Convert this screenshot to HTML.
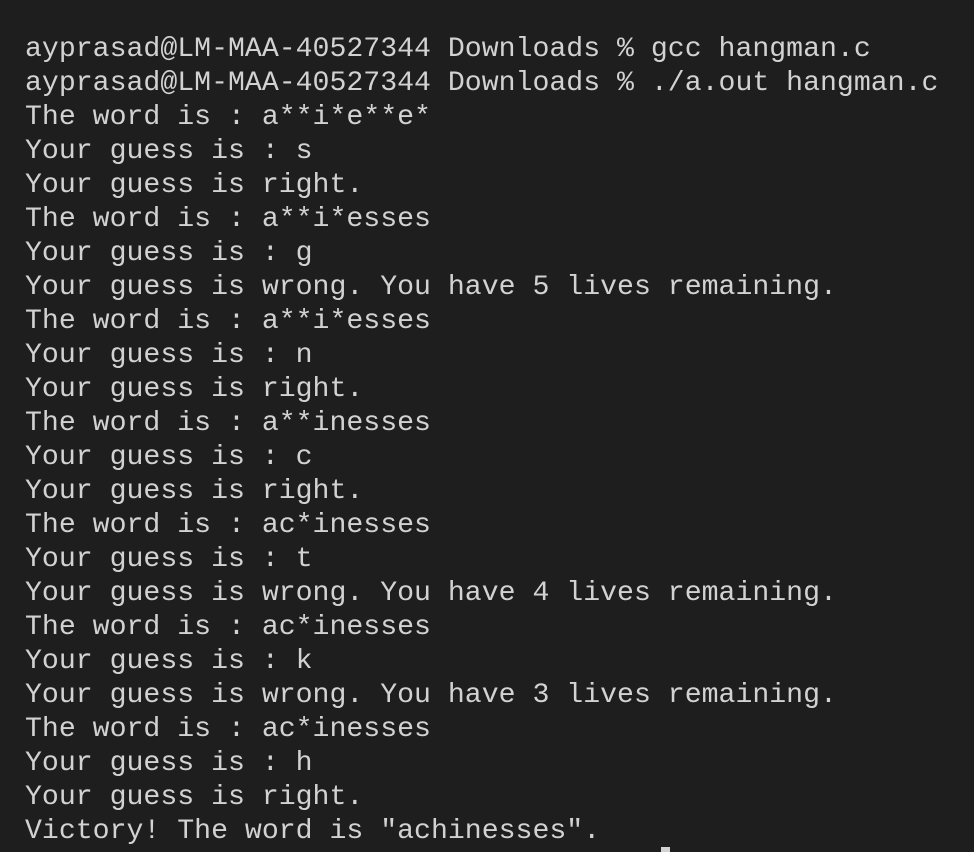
<!DOCTYPE html>
<html><head><meta charset="utf-8"><style>
html,body{margin:0;padding:0;background:#1e1e1e;width:974px;height:852px;overflow:hidden}
pre{margin:0;position:absolute;left:25px;top:33px;font-family:"Liberation Mono","DejaVu Sans Mono",monospace;font-size:28.2px;line-height:34px;color:#d2d2d2;white-space:pre}
.cur{position:absolute;left:661px;top:847px;width:9px;height:5px;background:#d2d2d2}
</style></head><body>
<pre>ayprasad@LM-MAA-40527344 Downloads % gcc hangman.c
ayprasad@LM-MAA-40527344 Downloads % ./a.out hangman.c
The word is : a**i*e**e*
Your guess is : s
Your guess is right.
The word is : a**i*esses
Your guess is : g
Your guess is wrong. You have 5 lives remaining.
The word is : a**i*esses
Your guess is : n
Your guess is right.
The word is : a**inesses
Your guess is : c
Your guess is right.
The word is : ac*inesses
Your guess is : t
Your guess is wrong. You have 4 lives remaining.
The word is : ac*inesses
Your guess is : k
Your guess is wrong. You have 3 lives remaining.
The word is : ac*inesses
Your guess is : h
Your guess is right.
Victory! The word is "achinesses".</pre>
<div class="cur"></div>
</body></html>
